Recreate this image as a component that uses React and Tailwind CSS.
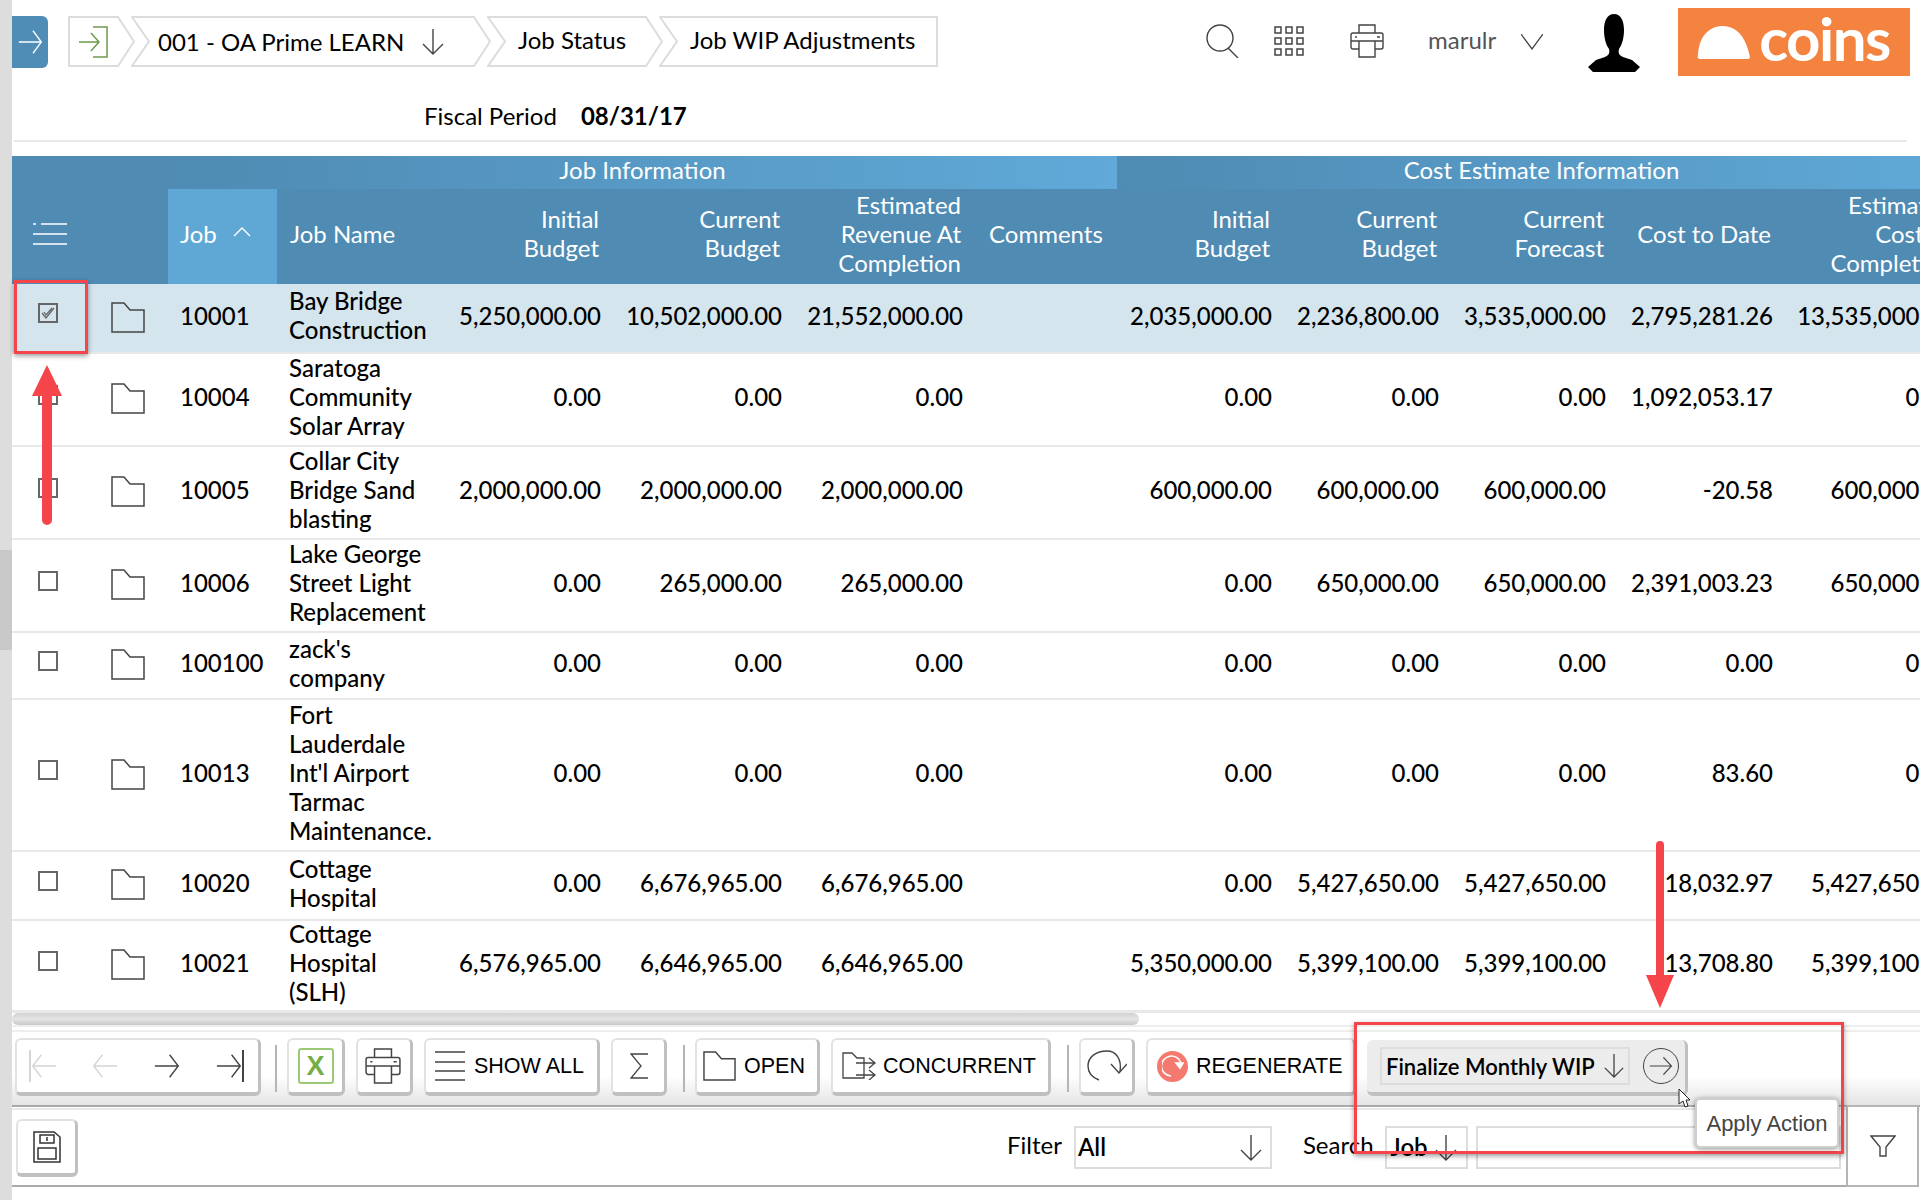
const rows = [
  { id: '10001', name: ['Bay Bridge', 'Construction'], h: 'h-[69px] bg-[#d5e5ee]', checked: true, v: ['5,250,000.00', '10,502,000.00', '21,552,000.00', '2,035,000.00', '2,236,800.00', '3,535,000.00', '2,795,281.26', '13,535,000.00'] },
  { id: '10004', name: ['Saratoga', 'Community', 'Solar Array'], h: 'h-[93px]', v: ['0.00', '0.00', '0.00', '0.00', '0.00', '0.00', '1,092,053.17', '0.00'] },
  { id: '10005', name: ['Collar City', 'Bridge Sand', 'blasting'], h: 'h-[93px]', v: ['2,000,000.00', '2,000,000.00', '2,000,000.00', '600,000.00', '600,000.00', '600,000.00', '-20.58', '600,000.00'] },
  { id: '10006', name: ['Lake George', 'Street Light', 'Replacement'], h: 'h-[93px]', v: ['0.00', '265,000.00', '265,000.00', '0.00', '650,000.00', '650,000.00', '2,391,003.23', '650,000.00'] },
  { id: '100100', name: ["zack's", 'company'], h: 'h-[67px]', v: ['0.00', '0.00', '0.00', '0.00', '0.00', '0.00', '0.00', '0.00'] },
  { id: '10013', name: ['Fort', 'Lauderdale', "Int'l Airport", 'Tarmac', 'Maintenance.'], h: 'h-[152px]', v: ['0.00', '0.00', '0.00', '0.00', '0.00', '0.00', '83.60', '0.00'] },
  { id: '10020', name: ['Cottage', 'Hospital'], h: 'h-[69px]', v: ['0.00', '6,676,965.00', '6,676,965.00', '0.00', '5,427,650.00', '5,427,650.00', '18,032.97', '5,427,650.00'] },
  { id: '10021', name: ['Cottage', 'Hospital', '(SLH)'], h: 'h-[91px]', v: ['6,576,965.00', '6,646,965.00', '6,646,965.00', '5,350,000.00', '5,399,100.00', '5,399,100.00', '13,708.80', '5,399,100.00'] },
];

function ArrowRight({ className = 'w-[26px] h-[26px]', stroke = '#444' }) {
  return (
    <svg viewBox="0 0 30 30" fill="none" stroke={stroke} strokeWidth="1.6" preserveAspectRatio="none" className={`shrink-0 ${className}`}>
      <path d="M1 15h27M18 2l10 13-10 13" />
    </svg>
  );
}

function ArrowLeft({ stroke }) {
  return (
    <svg viewBox="0 0 30 30" fill="none" stroke={stroke} strokeWidth="1.6" preserveAspectRatio="none" className="shrink-0 w-[26px] h-[26px]">
      <path d="M29 15H2M12 2L2 15l10 13" />
    </svg>
  );
}

function ArrowDown({ className = 'w-[24px] h-[26px]' }) {
  return (
    <svg viewBox="0 0 24 26" fill="none" stroke="#444" strokeWidth="1.4" className={`shrink-0 ${className}`}>
      <path d="M12 0v25M2 15l10 10 10-10" />
    </svg>
  );
}

function Folder({ className = 'w-[34px] h-[31px]' }) {
  return (
    <svg viewBox="0 0 34 31" fill="none" stroke="#444" strokeWidth="1.5" className={className}>
      <path d="M1 1h12l6 7h14v22H1z" />
    </svg>
  );
}

function Printer({ className = 'w-[34px] h-[34px]' }) {
  return (
    <svg viewBox="0 0 34 34" fill="none" stroke="#444" strokeWidth="1.4" className={className}>
      <path d="M9 9V1h16v8M9 25H3a2 2 0 0 1-2-2V11a2 2 0 0 1 2-2h28a2 2 0 0 1 2 2v12a2 2 0 0 1-2 2h-6" />
      <path d="M9 17h16v16H9zM1 17h32M5 13h2M27 13h3" />
    </svg>
  );
}

function Crumb({ width, first, last, children }) {
  const w = width;
  const points = last
    ? `1,1 ${w - 1},1 ${w - 1},50 1,50 18,25.5`
    : first
      ? `1,1 ${w - 17},1 ${w - 1},25.5 ${w - 17},50 1,50`
      : `1,1 ${w - 17},1 ${w - 1},25.5 ${w - 17},50 1,50 18,25.5`;
  return (
    <div className="relative h-[52px] flex items-center shrink-0 -ml-[4px] first:ml-0" style={{ width }}>
      <svg className="absolute inset-0 h-[52px]" style={{ width }} fill="none" stroke="#dcdcdc" strokeWidth="2">
        <polygon points={points} />
      </svg>
      <div className="relative flex items-center w-full">{children}</div>
    </div>
  );
}

function Btn({ className = '', children }) {
  return (
    <div className={`h-[58px] shrink-0 flex items-center bg-white rounded-[6px] border-2 border-[#e2e2e2] border-r-[3px] border-r-[#c0c0c0] border-b-[4px] border-b-[#c0c0c0] ${className}`}>
      {children}
    </div>
  );
}

function Sep({ className = 'ml-[3px]' }) {
  return <div className={`w-[2px] h-[47px] bg-[#b5b5b5] shrink-0 -mr-[1px] mt-[7px] ${className}`} />;
}

function Head({ children, className = 'pr-[5px]' }) {
  return (
    <th className={`font-normal text-right align-middle ${className}`}>
      <div className="-mt-[7px]">{children}</div>
    </th>
  );
}

function Num({ children, className = 'pr-[3px]' }) {
  return (
    <td className={`text-right ${className}`}>
      <div className="-mt-[6px]">{children}</div>
    </td>
  );
}

export default function App() {
  return (
    <div className="w-[1920px] h-[1200px] relative overflow-hidden bg-white flex font-['Lato',sans-serif] text-[24px] leading-[29px] text-black">
      <div className="w-[12px] shrink-0 bg-[#dddddd] pt-[550px]">
        <div className="h-[100px] bg-[#c8c8c8]" />
      </div>

      <div className="w-[1908px] shrink-0 flex flex-col">
        {/* top bar */}
        <div className="h-[84px] flex pt-[16px]">
          <div className="w-[36px] h-[52px] bg-[#4f8cb6] rounded-r-[6px] flex items-center justify-center shrink-0">
            <ArrowRight stroke="#fff" className="w-[25px] h-[26px]" />
          </div>
          <div className="flex ml-[20px]">
            <Crumb width={67} first>
              <svg viewBox="0 0 30 32" fill="none" stroke="#6f9a4c" strokeWidth="1.5" className="w-[30px] h-[32px] ml-[11px]">
                <path d="M14 1h14v30H14" />
                <path d="M0 16h20M12 7l8 9-8 9" />
              </svg>
            </Crumb>
            <Crumb width={360}>
              <span className="ml-[27px] whitespace-nowrap -mt-[2px]">001 - OA Prime LEARN</span>
              <ArrowDown className="w-[24px] h-[26px] ml-[17px]" />
            </Crumb>
            <Crumb width={176}>
              <span className="ml-[31px] whitespace-nowrap -mt-[6px]">Job Status</span>
            </Crumb>
            <Crumb width={279} last>
              <span className="ml-[31px] whitespace-nowrap -mt-[6px]">Job WIP Adjustments</span>
            </Crumb>
          </div>

          <div className="flex items-start ml-[256px]">
            <svg viewBox="0 0 34 34" fill="none" stroke="#444" strokeWidth="1.4" className="w-[34px] h-[34px] mt-[8px] ml-[12px]">
              <circle cx="14" cy="14" r="13" />
              <path d="M22 24l10 10" />
            </svg>
            <svg viewBox="0 0 30 30" fill="none" stroke="#444" strokeWidth="1.5" className="w-[30px] h-[30px] mt-[10px] ml-[34px]">
              <path d="M1 1h6v6H1zM12 1h6v6h-6zM23 1h6v6h-6zM1 12h6v6H1zM12 12h6v6h-6zM23 12h6v6h-6zM1 23h6v6H1zM12 23h6v6h-6zM23 23h6v6h-6z" />
            </svg>
            <Printer className="w-[34px] h-[34px] mt-[8px] ml-[46px]" />
            <span className="text-[#555] ml-[44px] mt-[9px]">marulr</span>
            <svg viewBox="0 0 22 16" fill="none" stroke="#444" strokeWidth="1.3" className="w-[22px] h-[16px] mt-[18px] ml-[25px]">
              <path d="M0 0l11 15L22 0" />
            </svg>
            <svg viewBox="0 0 52 58" className="w-[52px] h-[58px] -mt-[2px] ml-[45px]" fill="#000">
              <path d="M26 0c7 0 10 7 10 16 0 8-2 15-5 19-1 4 0 6 4 8l9 3 8 7-5 5H5l-5-5 8-7 9-3c4-2 5-4 4-8-3-4-5-11-5-19C16 7 19 0 26 0z" />
            </svg>
            <div className="w-[232px] h-[68px] -mt-[8px] ml-[38px] bg-[#f58340] flex items-center">
              <svg viewBox="0 0 54 34" fill="#fff" className="w-[54px] h-[34px] ml-[19px] mt-[2px]">
                <path d="M1 29C2 12 10 1 25 0c15 0 24 11 28 31l-1 2H3c-2 0-3-2-2-4z" />
              </svg>
              <span className="text-white font-bold text-[60px] leading-[60px] tracking-[-1.5px] ml-[8px] -mt-[9px]">coins</span>
            </div>
          </div>
        </div>

        {/* fiscal period */}
        <div className="h-[58px] w-[1893px] ml-[2px] border-b-2 border-[#e8e8e8] flex items-start pl-[410px] pt-[17px]">
          <span>Fiscal Period</span>
          <span className="ml-[24px] font-bold">08/31/17</span>
        </div>

        <div className="h-[14px] shrink-0" />

        {/* grid */}
        <div className="w-[1908px] h-[857px] shrink-0 overflow-hidden border-b-2 border-[#e8e8e8]">
          <table className="table-fixed border-collapse w-[1954px]">
            <colgroup>
              <col className="w-[76px]" />
              <col className="w-[80px]" />
              <col className="w-[109px]" />
              <col className="w-[173px]" />
              <col className="w-[154px]" />
              <col className="w-[181px]" />
              <col className="w-[181px]" />
              <col className="w-[151px]" />
              <col className="w-[158px]" />
              <col className="w-[167px]" />
              <col className="w-[167px]" />
              <col className="w-[167px]" />
              <col className="w-[190px]" />
            </colgroup>
            <thead className="text-white">
              <tr className="h-[33px]">
                <th colSpan={2} className="bg-[#4f8bb3]" />
                <th colSpan={6} className="font-normal text-center bg-gradient-to-r from-[#4f8bb3] to-[#60a9d8]">
                  <div className="-mt-[7px]">Job Information</div>
                </th>
                <th colSpan={5} className="font-normal text-center bg-gradient-to-r from-[#4f8bb3] to-[#60a9d8]">
                  <div className="-mt-[7px]">Cost Estimate Information</div>
                </th>
              </tr>
              <tr className="h-[95px] bg-[#4f8bb3]">
                <th>
                  <svg viewBox="0 0 34 22" fill="none" stroke="#fff" strokeWidth="1.6" className="w-[34px] h-[22px] ml-[21px] -mt-[5px]">
                    <path d="M0 1h3M8 1h26M0 11h34M0 21h34" />
                  </svg>
                </th>
                <th />
                <th className="font-normal text-left pl-[12px] bg-[#5fa8d6]">
                  <div className="-mt-[7px] flex items-center">
                    Job
                    <svg viewBox="0 0 18 10" fill="none" stroke="#fff" strokeWidth="1.4" className="w-[18px] h-[10px] ml-[16px] -mt-[2px]">
                      <path d="M1 9l8-8 8 8" />
                    </svg>
                  </div>
                </th>
                <th className="font-normal text-left pl-[13px]">
                  <div className="-mt-[7px]">Job Name</div>
                </th>
                <Head>Initial<br />Budget</Head>
                <Head>Current<br />Budget</Head>
                <Head>Estimated<br />Revenue At<br />Completion</Head>
                <th className="font-normal text-left pl-[23px] whitespace-nowrap">
                  <div className="-mt-[7px]">Comments</div>
                </th>
                <Head>Initial<br />Budget</Head>
                <Head>Current<br />Budget</Head>
                <Head>Current<br />Forecast</Head>
                <Head>Cost to Date</Head>
                <Head className="pr-[13px]">Estimated<br />Cost At<br />Completion</Head>
              </tr>
            </thead>
            <tbody className="font-medium">
              {rows.map((r) => (
                <tr key={r.id} className={`${r.h} border-b-2 border-[#e8e8e8]`}>
                  <td>
                    <div className="w-[20px] h-[20px] border-2 border-[#666] ml-[26px] mb-[10px] flex items-center justify-center">
                      {r.checked && (
                        <svg viewBox="0 0 14 12" fill="none" stroke="#666" strokeWidth="1.3" className="w-[14px] h-[12px]">
                          <path d="M1 6l4 5 8-10M3 5l2 3 6-7" />
                        </svg>
                      )}
                    </div>
                  </td>
                  <td>
                    <Folder className="w-[34px] h-[31px] ml-[23px] mb-[2px]" />
                  </td>
                  <td className="pl-[12px]">
                    <div className="-mt-[6px]">{r.id}</div>
                  </td>
                  <td className="pl-[12px] whitespace-nowrap">
                    <div className="-mt-[6px]">
                      {r.name.map((line) => (
                        <div key={line}>{line}</div>
                      ))}
                    </div>
                  </td>
                  <Num>{r.v[0]}</Num>
                  <Num>{r.v[1]}</Num>
                  <Num>{r.v[2]}</Num>
                  <td />
                  <Num>{r.v[3]}</Num>
                  <Num>{r.v[4]}</Num>
                  <Num>{r.v[5]}</Num>
                  <Num>{r.v[6]}</Num>
                  <Num className="pr-[13px]">{r.v[7]}</Num>
                </tr>
              ))}
            </tbody>
          </table>
        </div>

        {/* horizontal scroll bar */}
        <div className="h-[14px] shrink-0 border-b-2 border-[#eeeeee]">
          <div className="w-[1127px] h-[12px] rounded-full bg-gradient-to-b from-[#d2d2d2] via-[#e4e4e4] to-[#c8c8c8]" />
        </div>

        {/* action toolbar */}
        <div className="h-[77px] shrink-0 border-t-2 border-t-[#eeeeee] border-b-2 border-b-[#aaaaaa] mt-[3px] pl-[3px] pt-[6px] flex items-start gap-[11px] bg-gradient-to-b from-white from-60% to-[#e4e4e4] font-['Liberation_Sans',sans-serif] text-[21.5px]">
          <Btn className="w-[246px] pl-[12px]">
            <div className="w-[63px] flex items-center">
              <div className="w-[2px] h-[32px] bg-[#d5d5d5]" />
              <ArrowLeft stroke="#d5d5d5" />
            </div>
            <div className="w-[62px] flex items-center">
              <ArrowLeft stroke="#d5d5d5" />
            </div>
            <div className="w-[62px] flex items-center">
              <ArrowRight />
            </div>
            <div className="flex items-center">
              <ArrowRight />
              <div className="w-[2px] h-[32px] bg-[#444]" />
            </div>
          </Btn>
          <Sep />
          <Btn className="w-[58px] justify-center">
            <div className="w-[36px] h-[36px] rounded-[3px] border-2 border-[#9ccb78] flex items-center justify-center">
              <span className="font-bold text-[#76ae45] text-[27px] leading-none">X</span>
            </div>
          </Btn>
          <Btn className="w-[57px] justify-center">
            <Printer className="w-[36px] h-[36px] -ml-[3px]" />
          </Btn>
          <Btn className="w-[176px] pl-[9px]">
            <svg viewBox="0 0 30 30" fill="none" stroke="#444" strokeWidth="1.6" className="w-[30px] h-[30px]">
              <path d="M0 1h30M0 11h30M0 20h30M0 29h30" />
            </svg>
            <span className="ml-[9px] whitespace-nowrap">SHOW ALL</span>
          </Btn>
          <Btn className="w-[56px] justify-center">
            <svg viewBox="0 0 18 26" fill="none" stroke="#444" strokeWidth="1.3" className="w-[18px] h-[26px]">
              <path d="M18 1H1l10 12L1 25h17" />
            </svg>
          </Btn>
          <Sep className="ml-[5px]" />
          <Btn className="w-[125px] pl-[6px]">
            <Folder className="w-[33px] h-[36px]" />
            <span className="ml-[8px]">OPEN</span>
          </Btn>
          <Btn className="w-[220px] pl-[9px]">
            <svg viewBox="0 0 34 28" fill="none" stroke="#444" strokeWidth="1.3" className="w-[34px] h-[28px]">
              <path d="M22 26H1V1h9l5 5h7v20z" />
              <path d="M14 11h19M27 6l6 5-6 5M14 23h19M27 18l6 5-6 5" />
            </svg>
            <span className="ml-[7px] whitespace-nowrap">CONCURRENT</span>
          </Btn>
          <Sep className="ml-[5px]" />
          <Btn className="w-[56px] justify-center">
            <svg viewBox="0 0 40 32" fill="none" stroke="#444" strokeWidth="1.4" className="w-[40px] h-[32px]">
              <path d="M12 30C4 27 1 22 1 16 1 7 9 1 20 1c9 0 15 8 13 21" />
              <path d="M24 14l8 9 8-9" />
            </svg>
          </Btn>
          <Btn className="w-[210px] pl-[9px]">
            <div className="w-[31px] h-[31px] rounded-full bg-[#f47a70] flex items-center justify-center">
              <svg viewBox="0 0 22 22" fill="none" stroke="#fff" strokeWidth="1.6" className="w-[22px] h-[22px]">
                <path d="M9 21A10 10 0 1 1 19 8" />
                <path d="M14 8h7l-3 5z" fill="#fff" />
              </svg>
            </div>
            <span className="ml-[8px] whitespace-nowrap">REGENERATE</span>
          </Btn>
          <div className="w-[321px] h-[56px] mt-[2px] shrink-0 bg-[#ececec] rounded-[6px] border-r-[3px] border-r-[#c0c0c0] border-b-[4px] border-b-[#c0c0c0] flex items-center pl-[13px] font-['Lato',sans-serif] text-[22px] font-semibold">
            <div className="w-[250px] h-[38px] border-2 border-[#dddddd] flex items-center pl-[4px] whitespace-nowrap">
              Finalize Monthly WIP
              <ArrowDown className="w-[22px] h-[26px] ml-[8px]" />
            </div>
            <div className="w-[36px] h-[36px] ml-[13px] shrink-0 rounded-full border-[1.5px] border-[#444] flex items-center justify-center">
              <ArrowRight className="w-[24px] h-[20px]" />
            </div>
          </div>
        </div>

        {/* filter bar */}
        <div className="h-[2px] shrink-0 bg-[#e8e8e8] mt-[1px]" />
        <div className="h-[77px] shrink-0 border-b-2 border-b-[#aaaaaa] w-[1834px] flex items-center pl-[4px]">
          <div className="w-[62px] h-[58px] bg-white rounded-[6px] border-2 border-[#e2e2e2] border-r-[3px] border-r-[#c0c0c0] border-b-[4px] border-b-[#c0c0c0] flex items-center justify-center">
            <svg viewBox="0 0 28 32" fill="none" stroke="#333" strokeWidth="1.5" className="w-[28px] h-[32px]">
              <path d="M1 1h20l6 5v25H1z" />
              <path d="M7 4h14v8H7zM5 17h18v11H5zM14 6v4" />
            </svg>
          </div>
          <span className="ml-[929px] -mt-[6px]">Filter</span>
          <div className="ml-[12px] w-[198px] h-[43px] border-2 border-[#dddddd] flex items-center justify-between pl-[2px] pr-[7px]">
            <span className="font-semibold -mt-[2px]">All</span>
            <ArrowDown className="w-[24px] h-[28px]" />
          </div>
          <span className="ml-[31px] -mt-[6px]">Search</span>
          <div className="ml-[11px] w-[83px] h-[43px] border-2 border-[#dddddd] flex items-center justify-between pl-[4px] pr-[8px]">
            <span className="font-semibold -mt-[2px]">Job</span>
            <ArrowDown className="w-[24px] h-[28px]" />
          </div>
          <div className="ml-[8px] w-[365px] h-[43px] border-2 border-[#dddddd]" />
        </div>
      </div>

      {/* filter toggle, sits over the right end of the toolbar rule */}
      <div className="absolute left-[1846px] top-[1105px] w-[73px] h-[82px] border-2 border-[#b5b5b5] bg-white flex items-center justify-center">
        <svg viewBox="0 0 26 22" fill="none" stroke="#444" strokeWidth="1.4" className="w-[26px] h-[22px]">
          <path d="M1 1h24l-9 11v9h-6v-9z" />
        </svg>
      </div>

      {/* screenshot annotations */}
      <div className="absolute left-[14px] top-[280px] w-[74px] h-[74px] border-[3px] border-[#f5454b] shadow-[0_2px_5px_rgba(0,0,0,0.4)]" />
      <div className="absolute left-[1354px] top-[1022px] w-[490px] h-[132px] border-[3px] border-[#f5454b] shadow-[0_2px_5px_rgba(0,0,0,0.4)]" />
      <svg viewBox="0 0 32 162" className="absolute left-[31px] top-[365px] w-[32px] h-[162px]" fill="#f5454b">
        <path d="M16 0l15 31H21v124a5 5 0 0 1-10 0V31H1z" />
      </svg>
      <svg viewBox="0 0 30 168" className="absolute left-[1645px] top-[840px] w-[30px] h-[168px]" fill="#f5454b">
        <path d="M15 168L1 135h10V5a4 4 0 0 1 8 0v130h10z" />
      </svg>
      <div className="absolute left-[1695px] top-[1098px] w-[144px] h-[50px] bg-white rounded-[5px] border-2 border-[#cfcfcf] shadow-[0_1px_5px_rgba(0,0,0,0.45)] flex items-center justify-center font-['Liberation_Sans',sans-serif] text-[22px] text-[#444] whitespace-nowrap">
        Apply Action
      </div>
      <svg viewBox="0 0 12 20" className="absolute left-[1678px] top-[1088px] w-[12px] h-[20px]" fill="#fff" stroke="#222" strokeWidth="1">
        <path d="M1 1v15l4-3 2 6 3-1-2-6h4z" />
      </svg>
    </div>
  );
}
